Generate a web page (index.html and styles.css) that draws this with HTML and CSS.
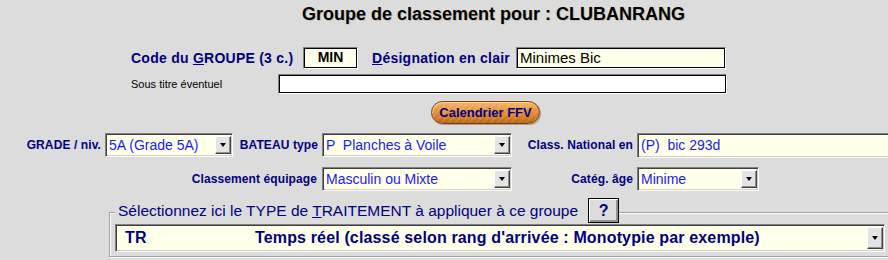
FILE: index.html
```html
<!DOCTYPE html>
<html lang="fr">
<head>
<meta charset="utf-8">
<title>Groupe de classement</title>
<link rel="stylesheet" href="styles.css">
</head>
<body>
<div class="page">
  <h1 class="title">Groupe de classement pour : CLUBANRANG</h1>

  <div class="row row-code">
    <span class="lbl lbl-code">Code du <u>G</u>ROUPE (3 c.)</span>
    <div class="field field-code">MIN</div>
    <span class="lbl lbl-desig"><u>D</u>ésignation en clair</span>
    <div class="field field-desig">Minimes Bic</div>
  </div>

  <div class="row row-sub">
    <span class="lbl-small">Sous titre éventuel</span>
    <div class="field field-sub"></div>
  </div>

  <div class="row row-btn">
    <button class="btn-cal">Calendrier FFV</button>
  </div>

  <div class="grid">
    <span class="glbl">GRADE / niv.</span>
    <div class="combo"><span class="combo-text">5A (Grade 5A)</span><span class="combo-btn"></span></div>
    <span class="glbl">BATEAU type</span>
    <div class="combo"><span class="combo-text">P  Planches à Voile</span><span class="combo-btn"></span></div>
    <span class="glbl">Class. National en</span>
    <div class="combo combo-nat"><span class="combo-text">(P)  bic 293d</span></div>

    <span class="glbl glbl-wide">Classement équipage</span>
    <div class="combo"><span class="combo-text">Masculin ou Mixte</span><span class="combo-btn"></span></div>
    <span class="glbl">Catég. âge</span>
    <div class="combo combo-age"><span class="combo-text">Minime</span><span class="combo-btn"></span></div>
  </div>

  <fieldset class="group">
    <legend class="group-legend">
      <span class="legend-text">Sélectionnez ici le TYPE de <u>T</u>RAITEMENT à appliquer à ce groupe</span>
      <button class="btn-help">?</button>
    </legend>
    <div class="combo combo-big">
      <span class="big-code">TR</span>
      <span class="big-desc">Temps réel (classé selon rang d'arrivée : Monotypie par exemple)</span>
      <span class="combo-btn"></span>
    </div>
  </fieldset>
</div>
</body>
</html>
```

FILE: styles.css
```css
html, body {
  margin: 0;
  padding: 0;
  overflow: hidden;
  background: #dcdcdc;
}

body {
  font-family: "Liberation Sans", Arial, sans-serif;
  color: #000080;
}

.page {
  width: 888px;
  height: 260px;
  display: flex;
  flex-direction: column;
}

.title {
  margin: 0;
  padding: 4px 0 0 302px;
  font-size: 18px;
  line-height: 20px;
  font-weight: bold;
  color: #000;
  text-shadow: 1px 1px 0 rgba(150, 100, 40, 0.25);
  white-space: nowrap;
}

.row {
  display: flex;
  align-items: center;
  flex: none;
}

.row-code {
  margin-top: 23px;
  height: 22px;
  padding-left: 131px;
}

.lbl {
  font-size: 14px;
  font-weight: bold;
  letter-spacing: 0.25px;
  white-space: nowrap;
  flex: none;
}

.lbl-code {
  width: 172px;
}

.lbl-desig {
  width: 144px;
  margin-left: 14px;
}

.field {
  box-sizing: border-box;
  flex: none;
  background: #ffffea;
  border: 1px solid;
  border-color: #808080 #ffffff #ffffff #808080;
  box-shadow: inset 0 0 0 1px #000;
  color: #000;
  white-space: nowrap;
  overflow: hidden;
}

.field-code {
  width: 55px;
  height: 22px;
  font-size: 14px;
  font-weight: bold;
  line-height: 18px;
  text-align: center;
}

.field-desig {
  width: 210px;
  height: 22px;
  font-size: 15px;
  line-height: 20px;
  padding-left: 3px;
}

.row-sub {
  margin-top: 5px;
  height: 20px;
  padding-left: 131px;
}

.lbl-small {
  width: 147px;
  flex: none;
  font-size: 11px;
  color: #000;
  white-space: nowrap;
}

.field-sub {
  width: 449px;
  height: 20px;
  background: #fff;
}

.row-btn {
  margin-top: 7px;
  height: 23px;
  padding-left: 431px;
}

.btn-cal {
  box-sizing: border-box;
  width: 109px;
  height: 23px;
  padding: 0;
  border: 1px solid #7a4410;
  border-radius: 12px;
  font-family: "Liberation Sans", Arial, sans-serif;
  font-size: 13px;
  font-weight: bold;
  color: #000080;
  background:
    repeating-linear-gradient(135deg, rgba(255, 255, 255, 0.10) 0 2px, rgba(0, 0, 0, 0) 2px 5px),
    linear-gradient(#f6b56a 0%, #e79440 40%, #d47c24 75%, #b8641a 100%);
  box-shadow: inset 1px 1px 0 rgba(255, 230, 180, 0.6), 1px 1px 0 rgba(90, 50, 10, 0.35);
}

.grid {
  margin-top: 9px;
  display: grid;
  grid-template-columns: 105px 128px 89px 190px 125px 260px;
  grid-template-rows: 24px 24px;
  row-gap: 10px;
  align-items: center;
  flex: none;
}

.glbl {
  font-size: 12px;
  font-weight: bold;
  letter-spacing: 0.1px;
  text-align: right;
  padding-right: 4px;
  white-space: nowrap;
}

.glbl-wide {
  grid-column: 1 / 4;
  padding-right: 5px;
}

.combo {
  box-sizing: border-box;
  height: 24px;
  display: flex;
  align-items: stretch;
  background: #ffffea;
  border: 1px solid;
  border-color: #808080 #ffffff #ffffff #808080;
  box-shadow: inset 1px 1px 0 #404040, inset -1px -1px 0 #d4d0c8;
  padding: 1px;
  color: #1a1aff;
  font-size: 14px;
}

.combo-text {
  flex: 1;
  padding-left: 2px;
  line-height: 20px;
  white-space: pre;
  overflow: hidden;
}

.combo-btn {
  box-sizing: border-box;
  flex: none;
  width: 16px;
  margin: 1px 0;
  background: #e4e4e4;
  border: 1px solid;
  border-color: #ffffff #404040 #404040 #ffffff;
  box-shadow: inset -1px -1px 0 #909090;
  display: flex;
  align-items: center;
  justify-content: center;
}

.combo-btn::after {
  content: "";
  width: 0;
  height: 0;
  border-left: 3px solid transparent;
  border-right: 3px solid transparent;
  border-top: 4px solid #000;
}

.combo-nat {
  height: 25px;
  align-self: start;
}

.combo-age {
  width: 122px;
}

.group {
  box-sizing: border-box;
  flex: none;
  width: 790px;
  min-width: 0;
  margin: 7px 0 0 109px;
  padding: 0 5px 4px 5px;
  border: 1px solid #a0a0a0;
  box-shadow: inset 1px 1px 0 #fff, 1px 1px 0 #fff;
}

.group-legend {
  display: flex;
  align-items: center;
  padding: 0 0 4px 3px;
  background: #dcdcdc;
}

.legend-text {
  font-size: 15.5px;
  white-space: nowrap;
  color: #000080;
}

.btn-help {
  box-sizing: border-box;
  width: 31px;
  height: 25px;
  margin-left: 10px;
  padding: 0;
  font-family: "Liberation Sans", Arial, sans-serif;
  font-size: 16px;
  font-weight: bold;
  color: #000080;
  background: #dcdcdc;
  border: 1px solid #000;
  box-shadow: inset 1px 1px 0 #fff, inset -2px -2px 0 #909090;
}

.combo-big {
  width: 770px;
  height: 28px;
  margin-top: -3px;
  color: #000080;
  font-size: 16px;
  font-weight: bold;
  letter-spacing: 0.15px;
}

.big-code {
  width: 130px;
  padding-left: 8px;
  flex: none;
  line-height: 24px;
}

.big-desc {
  flex: 1;
  line-height: 24px;
  white-space: nowrap;
}
```
